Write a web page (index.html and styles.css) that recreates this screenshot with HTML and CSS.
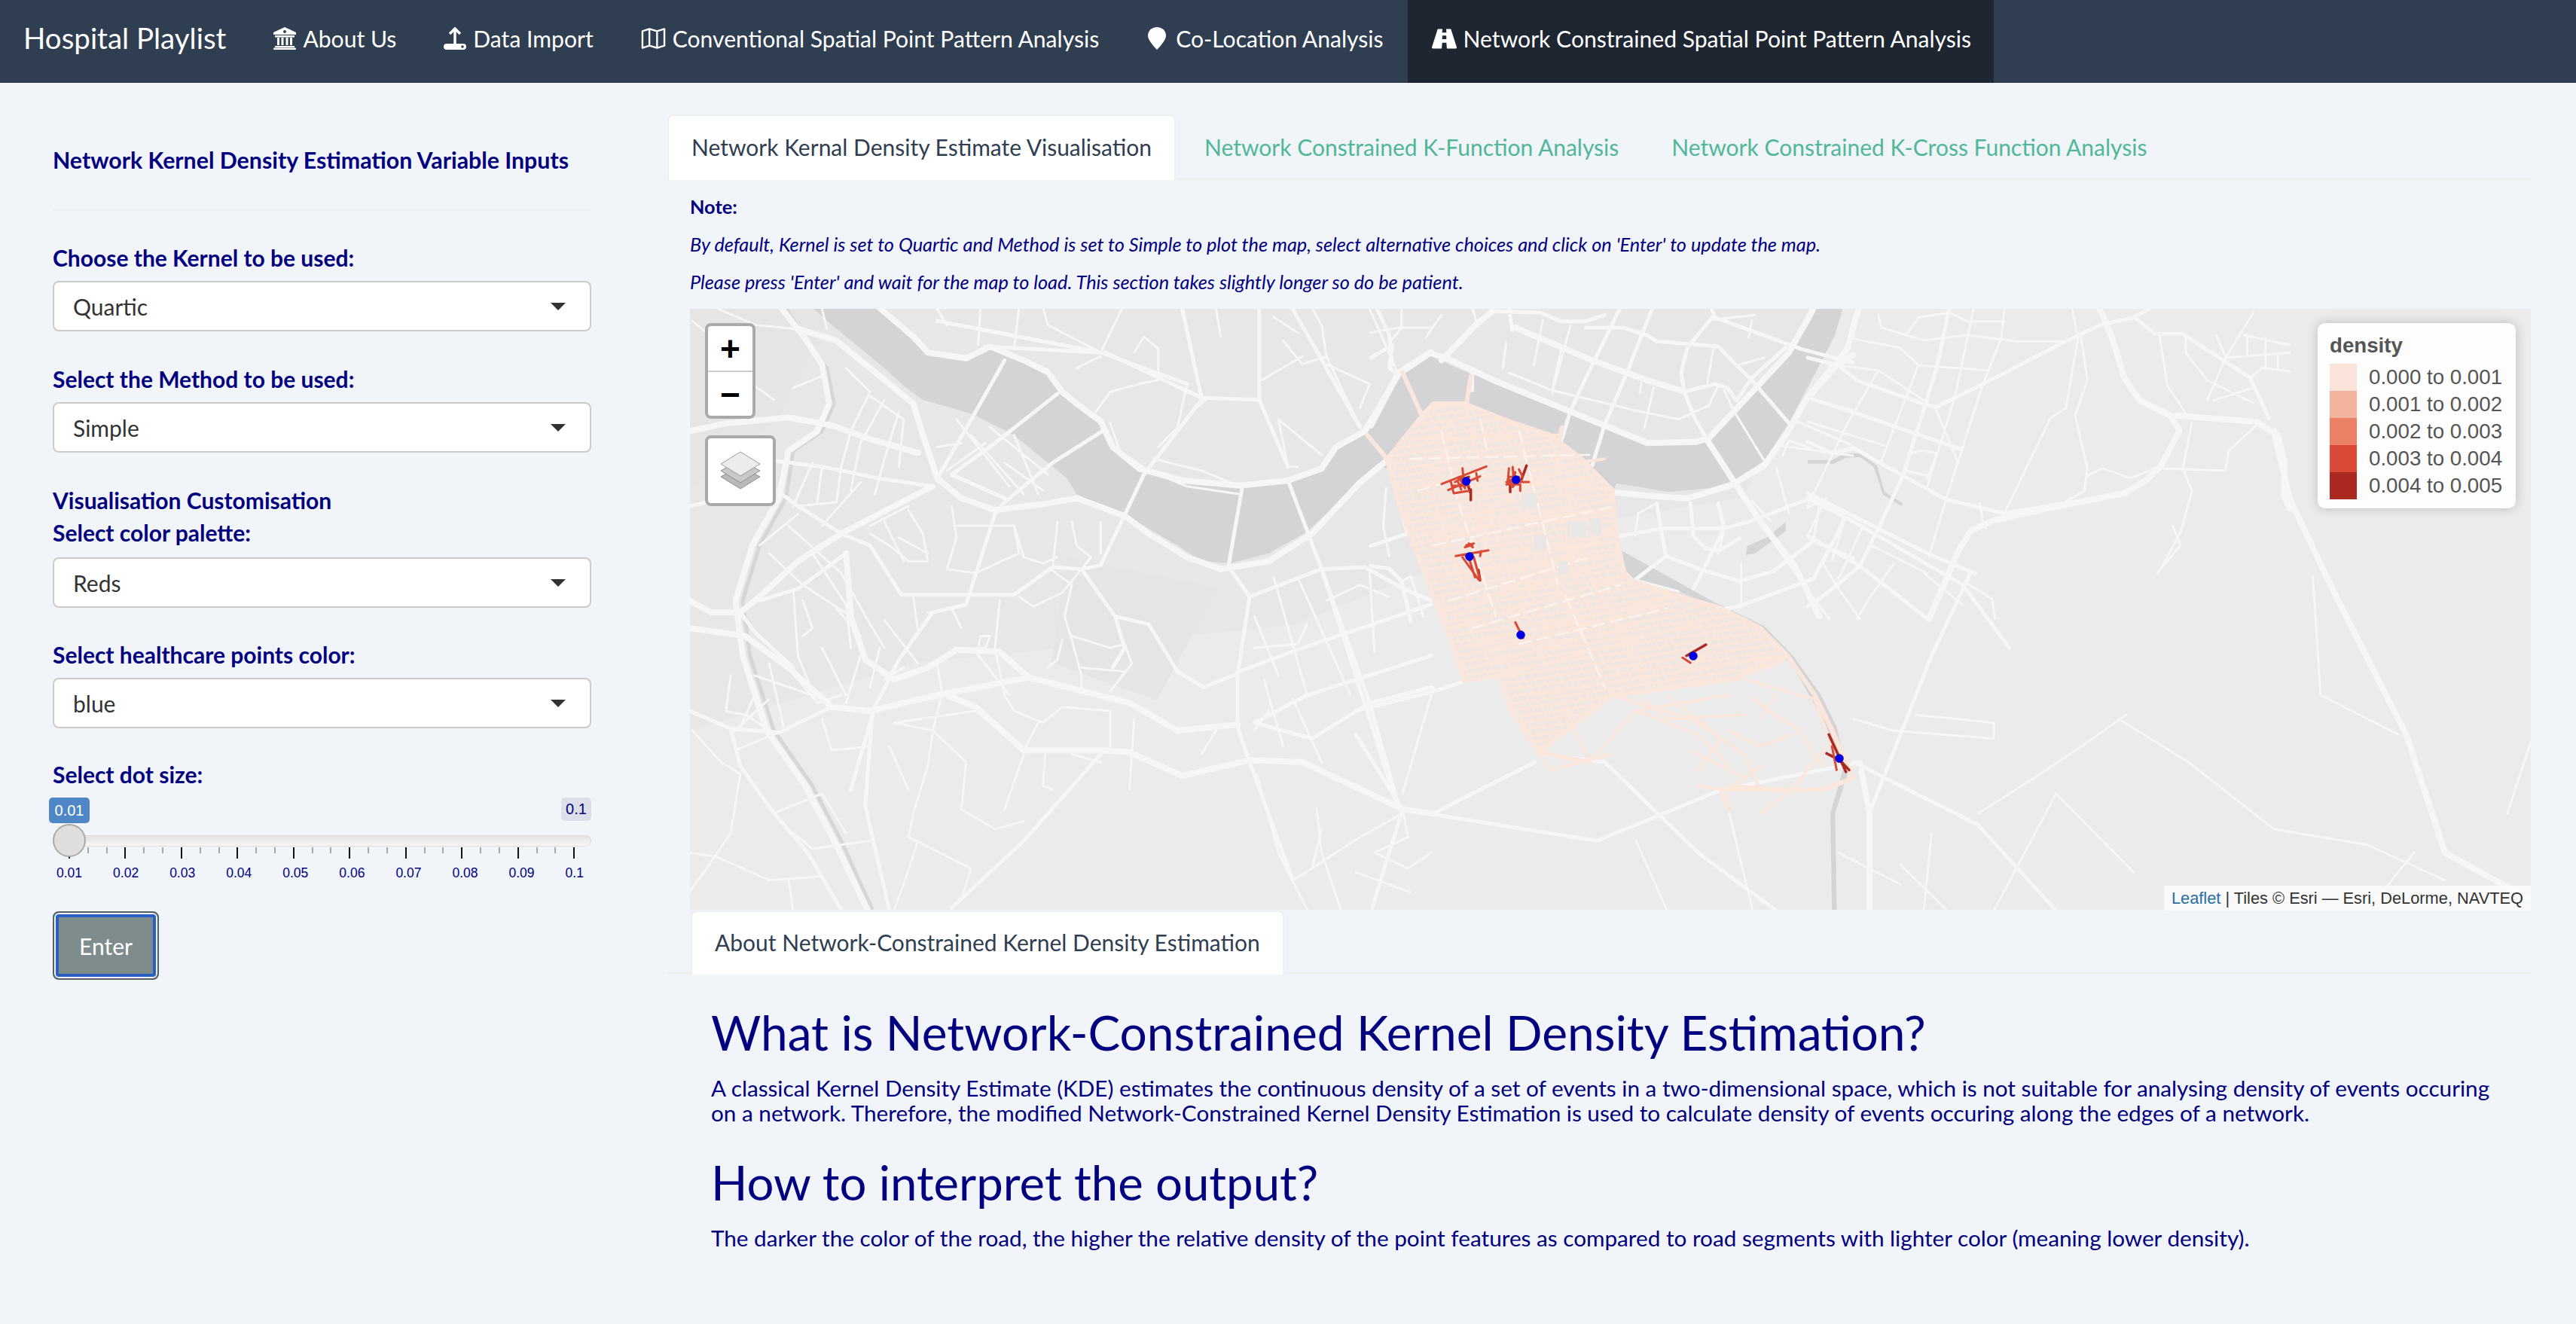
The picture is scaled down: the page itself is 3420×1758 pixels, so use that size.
FILE: index.html
```html
<!DOCTYPE html>
<html lang="en">
<head>
  <meta charset="UTF-8" />
  <title>Hospital Playlist</title>
  <link rel="stylesheet" href="styles.css">
</head>
<body>
  <nav class="navbar">
    <span class="brand">Hospital Playlist</span>
    <a class="nav-item">
      <svg class="nav-icon" viewBox="0 0 30 30"><path fill="#fff" d="M15 0 30 7v3H0V7z"/><rect x="2" y="11" width="26" height="2.5" fill="#fff"/><rect x="5" y="14" width="3" height="10" fill="#fff"/><rect x="10.500" y="14" width="3" height="10" fill="#fff"/><rect x="16.500" y="14" width="3" height="10" fill="#fff"/><rect x="22" y="14" width="3" height="10" fill="#fff"/><rect x="2" y="25" width="26" height="2" fill="#fff"/><rect x="0" y="27.500" width="30" height="2.500" rx="1" fill="#fff"/><circle cx="15" cy="6" r="2" fill="#2f3e51"/></svg>
      About Us
    </a>
    <a class="nav-item">
      <svg class="nav-icon" viewBox="0 0 30 30"><path fill="none" stroke="#fff" stroke-width="3.500" d="M8 9 15 2l7 7M15 2v20"/><rect x="0" y="22" width="30" height="8" rx="4" fill="#fff"/><circle cx="25" cy="26" r="1.800" fill="#2f3e51"/></svg>
      Data Import
    </a>
    <a class="nav-item">
      <svg class="nav-icon" viewBox="0 0 34 30"><path fill="none" stroke="#fff" stroke-width="2.500" stroke-linejoin="round" d="M2 5 11.500 2 22 5l10-3v23l-10 3-10.500-3L2 28zM11.500 2v23M22 5v23"/></svg>
      Conventional Spatial Point Pattern Analysis
    </a>
    <a class="nav-item">
      <svg class="nav-icon marker-icon" viewBox="0 0 24 30"><path fill="#fff" d="M12 0C5 0 0 5 0 11.500 0 17 8 26 12 30c4-4 12-13 12-18.500C24 5 19 0 12 0z"/></svg>
      Co-Location Analysis
    </a>
    <a class="nav-item active">
      <svg class="nav-icon" viewBox="0 0 34 27"><path fill="#fff" d="M8 0h6.500l-.5 5h6l-.5-5H26l8 25q.4 2-2 2H20.500l-.6-8h-5.800l-.6 8H2q-2.400 0-2-2zM14.300 9l-.2 5h5.800l-.2-5z"/></svg>
      Network Constrained Spatial Point Pattern Analysis
    </a>
  </nav>

  <div class="page">
    <aside class="sidebar">
      <h4 class="side-title">Network Kernel Density Estimation Variable Inputs</h4>
      <hr class="side-rule">

      <div class="field">
        <label class="field-label">Choose the Kernel to be used:</label>
        <div class="select"><span>Quartic</span><i class="caret"></i></div>
      </div>
      <div class="field">
        <label class="field-label">Select the Method to be used:</label>
        <div class="select"><span>Simple</span><i class="caret"></i></div>
      </div>
      <div class="field third">
        <label class="field-label">Visualisation Customisation</label>
        <label class="field-label tight">Select color palette:</label>
        <div class="select"><span>Reds</span><i class="caret"></i></div>
      </div>
      <div class="field last">
        <label class="field-label">Select healthcare points color:</label>
        <div class="select"><span>blue</span><i class="caret"></i></div>
      </div>

      <label class="field-label">Select dot size:</label>
      <div class="slider">
        <div class="slider-badges">
          <span class="badge from">0.01</span>
          <span class="badge to">0.1</span>
        </div>
        <div class="slider-track"><span class="slider-handle"></span></div>
        <div class="slider-ticks"></div>
        <div class="slider-labels">
          <span>0.01</span><span>0.02</span><span>0.03</span><span>0.04</span><span>0.05</span>
          <span>0.06</span><span>0.07</span><span>0.08</span><span>0.09</span><span>0.1</span>
        </div>
      </div>

      <button class="enter-btn">Enter</button>
    </aside>

    <main class="content">
      <ul class="tabs">
        <li class="tab selected">Network Kernal Density Estimate Visualisation</li>
        <li class="tab">Network Constrained K-Function Analysis</li>
        <li class="tab">Network Constrained K-Cross Function Analysis</li>
      </ul>

      <div class="notes">
        <p class="note-head">Note:</p>
        <p class="note-line">By default, Kernel is set to Quartic and Method is set to Simple to plot the map, select alternative choices and click on 'Enter' to update the map.</p>
        <p class="note-line">Please press 'Enter' and wait for the map to load. This section takes slightly longer so do be patient.</p>
      </div>

      <div class="map">
        <svg class="map-svg" width="2444" height="798" viewBox="0 0 2444 798">
          <defs>
            <pattern id="blocks" width="11" height="17" patternUnits="userSpaceOnUse" patternTransform="rotate(-16)">
              <rect width="11" height="17" fill="#fbe6dc"/>
              <rect x="2" y="3" width="7.500" height="10" fill="#ece7e4"/>
            </pattern>
          </defs>
          <rect width="2444" height="798" fill="#ebebeb"/>
          <path fill="#e7e7e8" d="M0 0H1500L1400 250 1100 300 800 420 300 470 0 560z"/>
          <path fill="#e5e5e6" d="M500 330 700 370 620 520 480 470zM0 0H190L120 140 0 240z"/>

          <!-- river, coordinates read off the crop of each part -->
          <g class="water">
            <path transform="translate(-16,-10) scale(.6378,.523)" d="M420 17 490 90 520 130 600 145 650 115 720 150 770 180 800 230 830 260 880 305 905 370 960 425 1050 455 1170 468 1270 455 1340 425 1370 370 1430 330 1500 185 1568 130 1568 600 1480 400 1420 460 1310 585 1230 640 1150 665 1090 660 1040 620 970 570 900 530 830 490 810 450 760 400 700 340 610 285 510 250 470 215 430 170 330 70 280 17z"/>
            <path transform="translate(904,-5) scale(.408,.3333)" d="M0 480 100 260 200 200 260 240 325 275 400 300 520 360 650 425 720 470 900 550 1060 545 1090 530 1200 390 1360 190 1410 100 1430 15 1535 15 1510 120 1460 240 1360 470 1280 620 1180 700 1100 730 970 745 800 710 785 750 800 900 815 1040 860 1095 1000 1140 1200 1240 700 900 300 700 0 640z"/>
            <path transform="translate(884,-10) scale(1.033,.523)" d="M350 705 410 738 470 772 525 825 562 900 598 1000 618 1080 632 1200 616 1300 618 1547 612 1547 610 1300 626 1190 600 1060 560 920 515 840 460 785 400 748 345 720z"/>
            <path transform="translate(1484,-5) scale(.408,.3333)" d="M0 617H80L120 592 170 592 225 640 250 745 310 790 305 800 245 755 215 645 170 605 125 608 85 632H0z"/>
            <path transform="translate(904,-5) scale(.408,.3333)" d="M1225 960 1290 925 1350 865 1350 900 1300 945 1250 990 1220 995z"/>
            <path class="stream" transform="translate(-16,-10) scale(.6378,.523)" d="M225 17 262 90 310 170 325 260 300 330 240 380 225 500 170 620 135 760 150 900 200 1090 280 1230 340 1370 405 1545"/>
          </g>

          <!-- roads west -->
          <g transform="translate(-16,-10) scale(.6378,.523)">
            <path class="road major" d="M420 17 490 90 520 130 600 145 650 115 720 150 770 180 800 230 830 260 880 305 905 370 960 425 1050 455 1170 468 1270 455 1340 425 1370 370 1430 330 1500 185 1568 130M250 70 330 100 400 170 490 260 510 340 540 450 590 500 660 530 760 515 830 500 930 545 980 590 1060 650 1130 680 1230 660 1320 590 1420 460 1480 400M24 330 100 310 230 295 320 315 400 350 500 385M215 17 262 90 300 160 315 260 290 330 230 380 210 500 155 620 120 760 135 900 185 1090 265 1230 325 1370 395 1545M1165 1075 1040 1090 940 1020 730 955 540 1000 400 1040 320 1030 230 930 140 850 24 830M1190 1165 1050 1205 940 1145 880 1140 720 1140 620 1030 550 995M1190 1165 1300 1170 1510 1290 1568 1300M350 640 360 800 390 910 450 960 520 930 580 885 670 890 730 955M530 470 340 590 250 660 170 750 130 790 70 790 24 760"/>
            <path class="road mid" d="M200 405 300 420 420 450 530 470M680 150 620 280 540 450M790 235 660 360 570 440M890 325 780 410 680 510 660 540 600 770 530 790 460 910 410 1030 360 1240M1090 250 970 440 880 670 840 680M1270 455 1340 680 1500 1290M1175 470 1145 680M1050 20 1090 245 1210 250 1270 420M1210 20 1210 250M1280 20 1420 320M890 130 1090 245M640 115 880 130 1060 210M540 50 880 130M1150 680 1190 750 1340 680 1430 675 1510 730 1568 760M1190 750 1165 950 1165 1080 1190 1170 1220 1270 1280 1470M1168 940 1300 880 1568 770M1200 1070 1310 1000 1568 900M1340 680 1440 1020 1500 1280M1200 1070 1320 1110 1440 1020 1568 980M880 1150 720 1370 570 1540M405 1040 390 1280 440 1545M24 1040 110 1085 130 1180 200 1300 270 1400 340 1545M110 1085 210 1095 320 1030M465 745 700 745 780 675 840 680 910 800 980 820 1040 940 1095 980 1165 945M910 800 930 880 905 930M465 745 400 620 340 590M350 640 250 730 170 760M24 520 100 500 160 440 250 520 340 590M570 440 680 500M130 790 160 840 240 930"/>
            <path class="road minor" d="M80 17 160 60 240 70M300 20 310 70M540 20 560 60M630 17 625 110M710 17 700 120M760 17 770 60 880 130M925 17 880 130M1120 20 1130 90M1320 17 1340 60 1350 140 1420 320M1440 20 1480 130 1500 185M1240 40 1290 80M1350 160 1440 210 1420 270M1260 100 1300 160 1350 140M1215 200 1300 140M900 310 920 380 980 430 1060 470 1170 490M1000 370 1040 320 1060 210M990 400 1090 430 1170 470M1250 300 1270 420 1290 420M1250 300 1340 390M1080 270 1100 250M870 280 900 230 960 210 1000 200 1000 120 970 90 950 130M830 170 880 140M30 50 80 100 120 180 200 250M130 170 90 210 60 240M240 220 300 190M350 170 400 230 360 330 340 420 330 510 250 520M400 240 470 300 460 420M460 280 430 400 410 490M430 250 380 360 360 480M300 420 290 510M280 410 240 520M380 460 300 570M230 570 340 690 400 820 430 880M280 640 350 770 360 880M170 620 250 540M190 640 260 720 360 800M580 300 690 470M610 340 720 490M650 320 770 440M700 340 750 490M560 430 640 360M680 410 760 480M540 370 590 360M570 520 580 600 560 680 620 690M480 530 510 590 520 660 480 660 440 620 400 590M460 600 520 640M470 660 430 560M480 520 400 570M580 570 700 570 720 650 760 665 790 650M700 570 710 640 620 690 600 770M820 560 830 620 860 650 840 680M790 560 780 680M880 560 880 640M710 750 740 775 800 740 840 680M775 680 820 720 805 800 820 860 840 950 840 985M820 850 900 880 930 870 945 920 900 990M840 930 930 940M800 860 790 910 770 930M540 920 550 1000 530 1090 450 1070M490 750 500 840M430 810 500 920M520 790 570 780 590 830M670 760 660 880 680 1000 700 1040 760 1070 800 1030 900 1040M620 890 690 1000M630 850 650 850 640 880 625 880zM240 730 250 900 290 1020M260 760 280 830 260 850M160 1000 130 1080M110 950 100 1040 140 1050 200 1095M190 920 220 1080M160 950 280 1000M230 930 290 1020 340 1000M330 780 380 850M300 880 350 1000M380 900 350 1020M420 880 400 980M470 930 430 960M450 1070 620 1040 720 1140M530 1090 600 1170 590 1290 660 1340 720 1320M530 1100 520 1180 490 1300 480 1360 610 1440 590 1520M440 1130 480 1240M720 1150 680 1290M750 1070 720 1140M765 1140 760 1230 780 1240M900 1040 900 1130M950 1060 940 1240M820 1150 880 1170M1120 1090 1090 1150M1200 1090 1230 1040M1280 1010 1340 1170M1220 960 1260 1130M1200 800 1250 950M1310 820 1290 870 1200 880M1240 700 1310 1000M1290 700 1400 1000M1350 760 1420 720 1480 750M1440 690 1450 890M1340 1340 1320 1440M1510 1300 1420 1360 1320 1440 1280 1470M1510 1300 1520 1360 1450 1400 1520 1440 1568 1400M1205 1200 1250 1400 1310 1545M1330 1290 1340 1400 1380 1545M30 1090 90 1170 130 1200M130 1200 110 1350 60 1440 24 1500M120 1140 220 1090M200 1300 300 1250 350 1350M190 1010 110 1100M240 1350 280 1390 400 1370M24 1400 80 1410 190 1470 300 1460M230 1470 240 1545M500 1370 470 1480 450 1545M300 1060 320 1140 400 1130"/>
          </g>

          <!-- roads middle -->
          <g transform="translate(904,-5) scale(.408,.3333)">
            <path class="road major" d="M0 480 90 270 190 190 260 220 330 260 400 300 520 360 650 425 760 480 900 550 1060 545 1100 530 1200 400 1360 190 1420 60 1440 15M780 745 900 760 1030 770 1170 720 1280 640 1360 500 1420 370 1500 250 1568 200M1090 530 1180 700 1260 850 1380 1040 1460 1240M230 220 340 80 400 20M470 90 720 220 900 300 1020 345"/>
            <path class="road mid" d="M400 25 550 30 620 65 700 65 760 40M1240 300 1360 470M1110 20 1120 50 1400 175 1568 230M450 15 460 100M1020 345 1120 315 1160 330 1190 380 1240 290 1350 170M810 15 700 290 650 420 620 540M915 15 830 280 760 480 720 640M1110 50 1030 170 1010 270 1020 345 1050 440 1090 530M700 90 820 90 900 120 930 145 1130 165 1190 240 1240 300M330 270 330 340M810 920 950 890 1150 890 1240 860 1430 770 1568 840M930 790 960 1000 860 1095M960 1000 1090 1060 1200 1100 1310 1060 1440 940 1568 1010M1040 790 1050 920 1090 970 1130 980 1200 930M1130 790 1150 890 1050 1130M1200 1200 1440 1090 1540 860M1060 1230 1200 1200M0 210 70 160 60 250 90 280M0 960 120 910 60 650M0 1040 60 1050 100 1100 130 1260M20 15 60 120 70 240"/>
            <path class="road minor" d="M100 15 100 90 60 150M0 110 90 90 200 90 230 40M180 130 200 90M330 15 350 85M450 270 590 340 860 420 1000 455 1050 430M590 340 620 170M650 80 590 350M530 240 560 60M440 150 430 250M880 310 875 350M920 330 890 490M1000 455 1100 400 1130 320M1115 170 1095 310M1150 340 1180 420 1280 620M1230 130 1240 60M1190 240 1280 210M1330 560 1568 600M1340 600 1360 540 1430 570M1320 650 1360 830M1420 370 1568 420M1380 460 1568 560M1100 60 1250 40M1420 810 1470 770M860 920 870 830 930 790M860 1095 1000 1140M1240 780 1300 860M1150 900 1130 990M1290 910 1400 1100 1450 1240M1540 860 1500 1020M1440 940 1460 790M1205 1200 1205 1030M50 730 40 880 60 1000M100 1100 130 1080 170 1240"/>
          </g>

          <!-- roads east -->
          <g transform="translate(1484,-5) scale(.408,.3333)">
            <path class="road major" d="M0 370 80 260 130 170 165 15M950 15 990 130 1030 290 1080 380 1180 440 1210 500 1150 640 1100 700 1030 750 820 800 600 860 530 900 490 980 395 1250M1200 440 1460 465 1530 520 1550 620 1550 760 1568 810"/>
            <path class="road mid" d="M0 210 100 240 160 300 390 400 420 405 570 315 830 150 950 80 1060 50 1110 15M0 750 230 890 390 990 545 1070M0 545 80 590 150 570 310 680 450 775 640 830 830 790M460 15 420 250 310 680 230 890 170 1040 40 1170 0 1200M1070 55 1130 115 1220 115 1440 290 1500 450M0 370 130 420 500 575M0 920 170 1040 390 1250"/>
            <path class="road minor" d="M640 15 630 130 570 315 450 775 395 1000M150 135 300 170 360 240 590 260M0 465 250 560M1440 290 1480 250 1568 265M860 15 880 130 840 410 790 450 640 830M890 130 910 300 870 440 910 650 900 740 830 790M910 680 960 650 1050 690 1130 650 1360 660 1370 580 1460 480M1145 120 1170 320 1240 450M1250 470 1220 650 1250 740 1215 900 1140 1070M1230 120 1230 190 1300 300 1450 390M1320 380 1450 330M1360 210 1568 190M1420 120 1568 160M1360 210 1450 30M1330 120 1360 210 1300 380M230 260 130 470 0 800M100 240 230 260 390 390M230 40 240 90 320 120 380 140 520 120 680 145 830 145M320 120 360 50 460 30 520 65 640 65M540 15 480 360 390 720M360 240 240 620M415 410 490 630M340 590 370 580 420 590 390 690M330 590 320 660 390 680M20 1170 70 1250M380 1070 500 1190M520 1110 600 1170 610 1250M60 770 0 920M120 840 50 1030 100 1130 170 1250M180 880 100 1090M210 960 390 1070M280 1030 200 1170 160 1250M1490 130 1490 250M1530 190 1530 260M1430 130 1430 200M560 790 570 860 580 890"/>
          </g>

          <!-- roads south and far east -->
          <g transform="translate(884,-10) scale(1.033,.523)">
            <path class="road major" d="M1180 330 1200 500 1260 750 1350 1100 1400 1400 1510 1520M650 1190 660 1300 660 1547"/>
            <path class="road mid" d="M0 1230 60 1290 100 1300 230 1170M0 1040 100 990 140 965M60 1290 310 1370 470 1240 650 1170M240 1150 320 1170 440 1400 540 1547M640 1170 800 1330 900 1547M840 880 780 720 640 560 580 500M790 690 740 900 700 1100 660 1300M20 1547 60 1290 0 1100"/>
            <path class="road minor" d="M100 980 60 1250M480 1300 510 1547M820 1547 900 1250 1000 1450M720 1050 820 1070 820 1110 690 1090 640 1060M980 1060 1070 1170 1180 1340 1300 1380 1400 1470M990 1050 940 1120 880 1200 800 1300M1230 700 1240 1000 1340 1100M1360 1400 1300 1547M620 1400 700 1480M700 1430 760 1547M360 1370 400 1547M1050 570 1060 620 1030 690M740 1350 730 1547M1510 1120 1480 1300M0 1450 70 1500"/>
          </g>

          <!-- density network -->
          <g transform="translate(884,-10) scale(1.033,.523)">
            <path class="network" fill="url(#blocks)" d="M85 290 100 260 140 260 190 300 250 340 290 400 330 480 335 600 345 690 355 710 410 745 470 780 520 830 555 900 540 920 480 960 440 965 380 990 330 1000 235 1145 200 1040 185 950 140 965 130 900 100 750 60 540 40 400z"/>
            <path class="net-road wide" d="M15 340 40 400M60 180 85 290M148 190 142 262M265 320 262 350M40 400 60 540 100 750 130 900 140 965M85 290 100 260 140 260 190 300 250 340 290 400 330 480 335 600 345 690 355 710 410 745 470 780 520 830 555 900 590 1000 610 1080 635 1190 640 1210 600 1240 470 1240 480 1290M185 950 200 1040 235 1145 300 1170M235 1145 330 1000 380 990"/>
            <path class="net-road" d="M60 350 265 340M90 420 330 480M60 540 330 560M100 700 340 640M130 880 410 750M185 950 470 800M230 1000 540 900M140 260 180 600 240 900 300 1170M250 340 300 700 380 990M190 300 230 620 300 880 330 1000M100 600 270 420M130 800 330 580M470 780 450 900 380 990M380 990 490 960 540 900M300 1170 360 1040 480 1000M500 960 590 1010 610 1120 560 1240 480 1230M360 1040 440 1100 480 1180M480 1090 520 1130 560 1100M430 1140 500 1210M560 1240 520 1300M370 1010 400 1060 500 1050M70 470 320 400M70 620 330 500M110 790 335 660M150 930 360 820M120 300 100 500 150 800M330 1000 430 1060 500 1150 520 1240M400 1000 470 1110 440 1190M510 1010 570 1090 600 1180M235 1145 250 1190 330 1150M480 1240 520 1180M540 1000 520 1060M470 1240 440 1230M75 510 300 450M85 590 335 530M95 660 330 610M120 830 345 700M140 900 400 770M170 300 150 520 210 840M220 330 190 560 260 900M280 400 270 640 340 960"/>
            <path class="net-gap" d="M70 400 300 390M80 480 170 430M100 620 240 560 335 520M120 760 300 650M150 830 340 720M160 300 170 390M210 330 260 720M110 330 130 500 180 800M270 750 320 980M210 870 400 780"/>
          </g>
          <g class="net-blocks" transform="translate(904,-5) scale(.408,.3333)">
            <rect x="490" y="750" width="50" height="60"/>
            <rect x="640" y="860" width="60" height="60"/>
            <rect x="710" y="850" width="40" height="60"/>
            <rect x="530" y="920" width="40" height="60"/>
            <rect x="610" y="1020" width="30" height="50"/>
          </g>

          <!-- hot spots -->
          <g transform="translate(934,170) scale(.3333)">
            <path class="hot dark" d="M308 210V252M296 190 306 222M530 115 510 170M465 185V220M338 530 345 572M270 170 300 160"/>
            <path class="hot" d="M192 188 370 118M218 212 345 158M228 175 240 225 300 215M255 175 270 210M275 125 280 180M330 145 335 175M235 195 300 195M245 180 280 160M260 160 285 205M460 125 455 190M450 180H540M450 190H500M475 120 480 195M500 130 515 160M505 190V215M485 140 475 200M460 160 500 160M455 170 510 175M248 475 378 452M300 425 316 440M285 440 315 430M290 432 320 425M275 480 340 570M300 480 325 560M320 480 345 570M350 455 345 475M280 470 320 480"/>
          </g>
          <g transform="translate(884,-10) scale(1.033,.523)">
            <path class="hot dark" d="M425 900 450 872M608 1100 630 1195M605 1148 622 1165 634 1190"/>
            <path class="hot" d="M205 815 215 855M420 905 430 918M612 1130 618 1190"/>
          </g>
          <circle class="point" cx="1030.700" cy="229" r="5.500"/>
          <circle class="point" cx="1096.700" cy="227" r="5.500"/>
          <circle class="point" cx="1035" cy="329" r="5.500"/>
          <circle class="point" cx="1103" cy="433" r="5.500"/>
          <circle class="point" cx="1332" cy="461" r="5.500"/>
          <circle class="point" cx="1526" cy="597" r="5.500"/>
        </svg>

        <div class="zoom-ctrl">
          <span class="zoom-btn">+</span>
          <span class="zoom-btn">−</span>
        </div>
        <div class="layers-ctrl">
          <svg width="54" height="52" viewBox="0 0 54 52">
            <path fill="#b9b9b9" stroke="#8e8e8e" d="M27 20 53 34 27 50 1 34z"/>
            <path fill="#c9c9c9" stroke="#8e8e8e" d="M27 12 53 26 27 42 1 26z"/>
            <path fill="#ececec" stroke="#9a9a9a" d="M27 1 53 17 27 33 1 17z"/>
          </svg>
        </div>

        <div class="legend">
          <div class="legend-title">density</div>
          <div class="legend-row"><i class="swatch s1"></i>0.000 to 0.001</div>
          <div class="legend-row"><i class="swatch s2"></i>0.001 to 0.002</div>
          <div class="legend-row"><i class="swatch s3"></i>0.002 to 0.003</div>
          <div class="legend-row"><i class="swatch s4"></i>0.003 to 0.004</div>
          <div class="legend-row"><i class="swatch s5"></i>0.004 to 0.005</div>
        </div>

        <div class="attribution"><a>Leaflet</a> | Tiles © Esri — Esri, DeLorme, NAVTEQ</div>
      </div>

      <ul class="tabs about-tabs">
        <li class="tab selected">About Network-Constrained Kernel Density Estimation</li>
      </ul>

      <article class="about">
        <h1>What is Network-Constrained Kernel Density Estimation?</h1>
        <p>A classical Kernel Density Estimate (KDE) estimates the continuous density of a set of events in a two-dimensional space, which is not suitable for analysing density of events occuring on a network. Therefore, the modified Network-Constrained Kernel Density Estimation is used to calculate density of events occuring along the edges of a network.</p>
        <h2>How to interpret the output?</h2>
        <p>The darker the color of the road, the higher the relative density of the point features as compared to road segments with lighter color (meaning lower density).</p>
      </article>
    </main>
  </div>
</body>
</html>
```

FILE: styles.css
```css
html, body {
  margin: 0;
  padding: 0;
  background: #f1f4f9;
}

body {
  width: 3420px;
  height: 1758px;
  overflow: hidden;
  font-family: Lato, "Open Sans", sans-serif;
  color: #000080;
}

/* navbar */
.navbar {
  display: flex;
  align-items: stretch;
  height: 110px;
  background: #2f3e51;
  color: #fff;
}

.brand {
  font-size: 38.500px;
  line-height: 100px;
  padding: 0 31px 0 31px;
}

.nav-item {
  display: flex;
  align-items: center;
  gap: 9px;
  padding: 0 31px 8px 32px;
  font-size: 30.100px;
}

.nav-item.active {
  background: #1e2731;
  padding-right: 30px;
}

.nav-icon {
  width: 30px;
  height: 30px;
  flex: none;
}

.marker-icon {
  width: 24px;
  margin-right: 4px;
}

.nav-item:nth-child(4) .nav-icon {
  width: 33px;
}

.nav-item:nth-child(5) {
  padding-left: 34px;
  padding-right: 32px;
}

.nav-item.active .nav-icon {
  width: 33px;
  height: 27px;
}

/* layout */
.page {
  display: grid;
  grid-template-columns: 715px 2474px;
  column-gap: 101px;
  padding-left: 70px;
}

.sidebar {
  padding-top: 82px;
}

.side-title {
  margin: 0;
  font-size: 30.300px;
  line-height: 40px;
  font-weight: 700;
}

.side-rule {
  margin: 46px 0 42px;
  border: 0;
  border-top: 2px solid #ebeef0;
}

.field {
  margin-bottom: 43px;
}

.field.third {
  margin-bottom: 42px;
}

.field.last {
  margin-bottom: 41px;
}

.field-label {
  display: block;
  font-size: 30px;
  line-height: 40px;
  font-weight: 700;
  margin-bottom: 11px;
}

.field .field-label:has(+ .tight) {
  margin-bottom: 3px;
}

.select {
  display: flex;
  align-items: center;
  justify-content: space-between;
  box-sizing: border-box;
  height: 67px;
  padding: 0 32px 0 25px;
  background: #fff;
  border: 2px solid #cbcbcb;
  border-radius: 8px;
  color: #333;
  font-size: 30px;
}

.field-label.tight {
  margin-bottom: 13px;
}

.caret {
  width: 0;
  height: 0;
  border-left: 10px solid transparent;
  border-right: 10px solid transparent;
  border-top: 10px solid #333;
}

/* slider */
.slider {
  position: relative;
  font-family: "Liberation Sans", Arial, sans-serif;
}

.slider-badges {
  display: flex;
  justify-content: space-between;
  align-items: flex-start;
  margin-left: -5px;
}

.badge {
  border-radius: 5px;
  font-size: 20px;
  text-align: center;
}

.badge.from {
  width: 54px;
  height: 34px;
  line-height: 34px;
  background: #4f86c6;
  color: #fff;
}

.badge.to {
  width: 40px;
  height: 31px;
  line-height: 31px;
  background: #dcdfe8;
  color: #000080;
}

.slider-track {
  position: relative;
  box-sizing: border-box;
  height: 15px;
  margin-top: 16px;
  background: linear-gradient(#e4e4e4, #f6f6f6);
  border: 1px solid #dcdcdc;
  border-radius: 8px;
}

.slider-handle {
  position: absolute;
  left: -1px;
  top: -16px;
  box-sizing: border-box;
  width: 44px;
  height: 44px;
  background: #dedede;
  border: 2px solid #aaa;
  border-radius: 50%;
}

.slider-ticks {
  height: 15px;
  margin: 1px 21px 0;
  background:
    repeating-linear-gradient(90deg, #111 0 2px, transparent 2px 74.45px) 0 0 / 100% 15px no-repeat,
    repeating-linear-gradient(90deg, #a8a8a8 0 2px, transparent 2px 24.82px) 0 0 / 100% 8px no-repeat;
}

.slider-labels {
  display: flex;
  justify-content: space-between;
  margin: 7px 10px 0 5px;
  font-size: 17.500px;
  line-height: 24px;
}

.enter-btn {
  display: block;
  box-sizing: border-box;
  width: 141px;
  height: 91px;
  margin-top: 39px;
  background: #7f8c8d;
  border: 2px solid #555f66;
  border-radius: 8px;
  box-shadow: inset 0 0 0 2px #f1f4f9, inset 0 0 0 6px #2a5fc6;
  color: #fff;
  font: 30px Lato, sans-serif;
}

/* tabs */
.tabs {
  display: flex;
  margin: 42px 0 0;
  padding: 0;
  list-style: none;
  height: 87px;
  box-sizing: border-box;
  border-bottom: 3px solid #ecf0f1;
}

.tab {
  height: 87px;
  box-sizing: border-box;
  padding: 25px 32px 0;
  margin-right: 6px;
  font-size: 30px;
  line-height: 36px;
  color: #50b898;
}

.tab.selected {
  background: #fff;
  border: 2px solid #ecf0f1;
  border-bottom: 0;
  border-radius: 8px 8px 0 0;
  padding: 23px 30px 0;
  color: #2f3e51;
}

.notes {
  padding: 0 0 0 30px;
}

.notes p {
  margin: 0;
  font-size: 25.300px;
}

.note-head {
  padding-top: 20px;
  line-height: 30px;
  font-weight: 700;
}

.notes .note-line {
  margin-top: 20px;
  line-height: 30px;
  font-style: italic;
}

/* map */
.map {
  position: relative;
  width: 2444px;
  height: 799px;
  margin: 21px 0 0 30px;
  overflow: hidden;
}

.map-svg {
  display: block;
}

.water path {
  fill: #d4d4d7;
}

.water .stream {
  fill: none;
  stroke: #d6d6d8;
  stroke-width: 5;
  vector-effect: non-scaling-stroke;
}

.road, .net-road, .net-gap, .hot {
  fill: none;
  stroke-linecap: round;
  stroke-linejoin: round;
  vector-effect: non-scaling-stroke;
}

.road {
  stroke: #f6f6f7;
}

.road.major { stroke-width: 8; }
.road.mid { stroke-width: 5; }
.road.minor { stroke-width: 3; }

.network {
  stroke: #fbe6dc;
  stroke-width: 5;
  vector-effect: non-scaling-stroke;
}

.net-road {
  stroke: #fbe6dc;
  stroke-width: 4;
}

.net-road.wide {
  stroke-width: 6;
}

.net-gap {
  stroke: #fff3ee;
  stroke-width: 2.500;
  stroke-dasharray: 16 9;
}

.net-blocks rect {
  fill: #e9e7e6;
}

.hot {
  stroke: #d94a36;
  stroke-width: 3;
}

.hot.dark {
  stroke: #ab2a20;
  stroke-width: 3.500;
}

.point {
  fill: #0000e6;
  stroke: #0a0a9a;
  stroke-width: 0.500;
}

.zoom-ctrl {
  position: absolute;
  left: 20px;
  top: 19px;
  box-sizing: border-box;
  width: 67px;
  height: 127px;
  background: #fff;
  border: 4px solid #a9a9a9;
  border-radius: 8px;
  overflow: hidden;
}

.zoom-btn {
  display: block;
  height: 59px;
  text-align: center;
  color: #000;
  font: bold 46px/60px "Liberation Sans", Arial, sans-serif;
}

.zoom-btn + .zoom-btn {
  border-top: 2px solid #ccc;
}

.layers-ctrl {
  position: absolute;
  left: 20px;
  top: 168px;
  display: flex;
  align-items: center;
  justify-content: center;
  box-sizing: border-box;
  width: 94px;
  height: 94px;
  background: #fff;
  border: 4px solid #a9a9a9;
  border-radius: 8px;
}

.legend {
  position: absolute;
  right: 20px;
  top: 19px;
  box-sizing: border-box;
  width: 263px;
  height: 246px;
  padding: 14px 16px 0;
  background: rgba(255, 255, 255, 0.9);
  border-radius: 10px;
  box-shadow: 0 0 15px rgba(0, 0, 0, 0.2);
  color: #555;
  font: 27.700px/36px "Liberation Sans", Arial, sans-serif;
}

.legend-title {
  height: 40px;
  line-height: 32px;
  font-weight: 700;
}

.legend-row {
  display: flex;
  align-items: center;
  gap: 16px;
  height: 36px;
  white-space: nowrap;
}

.swatch {
  width: 36px;
  height: 36px;
  flex: none;
}

.s1 { background: #fae4da; }
.s2 { background: #f2b49c; }
.s3 { background: #ec8064; }
.s4 { background: #da4a36; }
.s5 { background: #aa2a21; }

.attribution {
  position: absolute;
  right: 0;
  bottom: 0;
  height: 33px;
  padding: 0 10px;
  background: rgba(255, 255, 255, 0.7);
  color: #333;
  font: 21.800px/33px "Liberation Sans", Arial, sans-serif;
}

.attribution a {
  color: #2a6fa3;
}

/* about */
.about-tabs {
  margin: 0;
  padding-left: 31px;
  height: 85px;
}

.about-tabs .tab {
  height: 85px;
  padding-top: 22px;
}

.about {
  padding-left: 58px;
  width: 2400px;
}

.about h1 {
  margin: 37px 0 0;
  font-size: 64px;
  line-height: 80px;
  font-weight: 400;
}

.about h2 {
  margin: 36px 0 0;
  font-size: 63.500px;
  line-height: 80px;
  font-weight: 400;
}

.about p {
  margin: 17px 0 0;
  font-size: 29.700px;
  line-height: 33px;
}
```
